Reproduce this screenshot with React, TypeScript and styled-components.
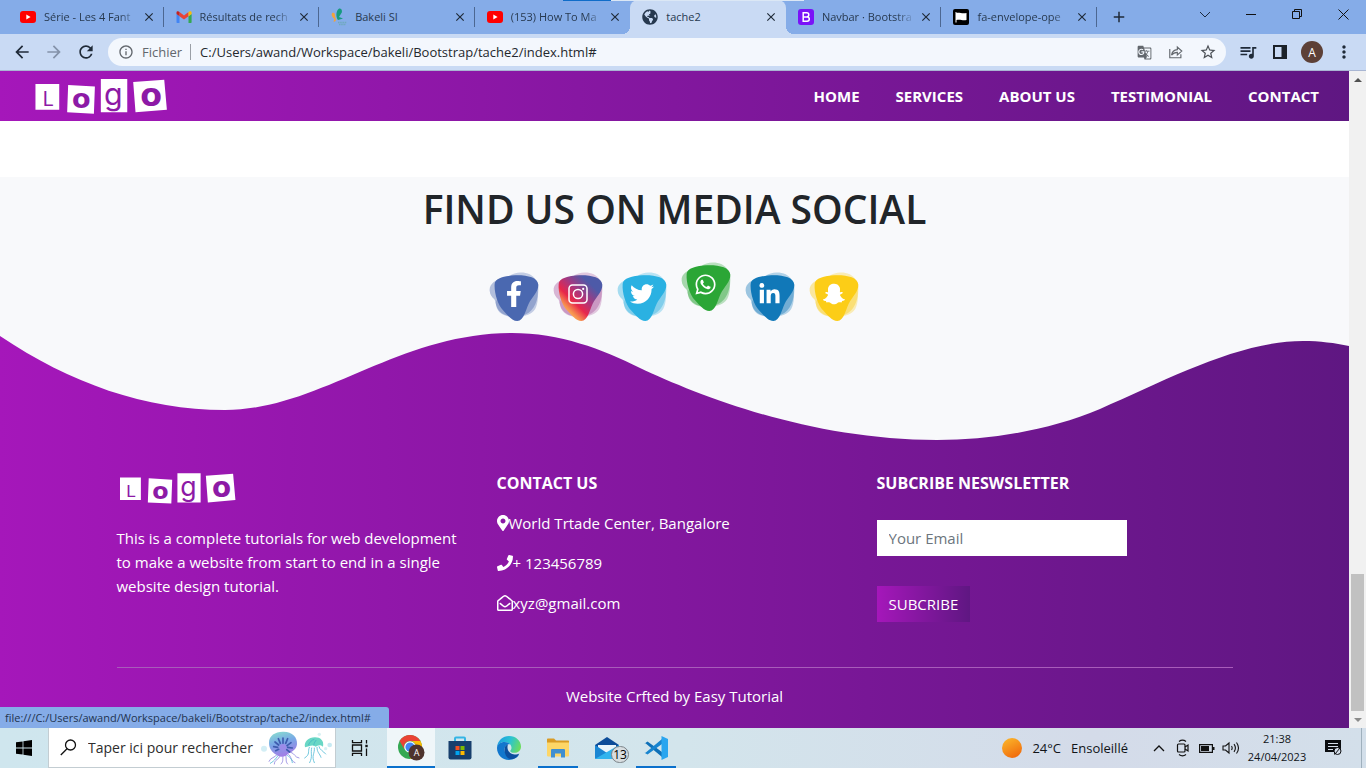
import React from 'react';
import styled, { createGlobalStyle, css } from 'styled-components';
import {
  FaFacebookF,
  FaGlobeAmericas,
  FaLinkedinIn,
  FaMapMarkerAlt,
  FaPhone,
  FaRegEnvelopeOpen,
  FaSnapchatGhost,
  FaTwitter,
  FaWhatsapp,
} from 'react-icons/fa';
import {
  MdAdd,
  MdArrowBack,
  MdArrowForward,
  MdClose,
  MdGTranslate,
  MdInfoOutline,
  MdMoreVert,
  MdQueueMusic,
  MdRefresh,
  MdStarBorder,
} from 'react-icons/md';

const brandGradient = 'linear-gradient(to right, #a517ba, #5f1782)';
const sans = '"Open Sans", "Noto Sans", sans-serif';

const GlobalStyle = createGlobalStyle`
  *, *::before, *::after { box-sizing: border-box; }
  body { margin: 0; font-family: ${sans}; font-size: 15px; line-height: 24px; color: #212529; }
  button, input { font-family: inherit; border: 0; padding: 0; margin: 0; background: none; }
  input { outline: 0; min-width: 0; }
  a { color: inherit; text-decoration: none; }
  h2, h3, p, ul { margin: 0; padding: 0; }
  ul { list-style: none; }
  svg { display: block; flex: none; }
`;

/* ---------- Window ---------- */

const Window = styled.div`
  position: relative;
  display: flex;
  flex-direction: column;
  min-height: 100vh;
`;

const LoadingLine = styled.div`
  position: absolute;
  top: 0;
  left: 563px;
  width: 241px;
  height: 1px;
  background: linear-gradient(to right, #0f6cc9 20%, #dbe7f5 20%);
`;

const TabStrip = styled.div`
  display: flex;
  height: 34px;
  padding-left: 8px;
  background: #85ace8;
`;

const Tabs = styled.div`
  display: flex;
  flex: 0 1 1089px;
  min-width: 0;
`;

const Tab = styled.div<{ $active?: boolean; $divider?: boolean }>`
  position: relative;
  display: flex;
  align-items: center;
  flex: 1 1 0;
  min-width: 0;
  padding: 0 8px 0 12px;
  color: #27394f;
  ${(p) =>
    p.$divider &&
    css`
      &::after {
        content: '';
        position: absolute;
        right: 0;
        top: 7px;
        height: 20px;
        width: 1px;
        background: #4c6791;
      }
    `}
  ${(p) =>
    p.$active &&
    css`
      background: #c9daf4;
      border-radius: 8px 8px 0 0;
      &::before,
      &::after {
        content: '';
        position: absolute;
        bottom: 0;
        width: 8px;
        height: 8px;
      }
      &::before {
        left: -8px;
        background: radial-gradient(circle at 0 0, transparent 8px, #c9daf4 8px);
      }
      &::after {
        right: -8px;
        background: radial-gradient(circle at 100% 0, transparent 8px, #c9daf4 8px);
      }
    `}
`;

const TabTitle = styled.button<{ $fade?: boolean }>`
  flex: 1;
  min-width: 0;
  margin: 0 4px 0 8px;
  overflow: hidden;
  white-space: nowrap;
  text-align: left;
  font-size: 11px;
  line-height: 20px;
  color: inherit;
  ${(p) => p.$fade && 'mask-image: linear-gradient(to right, #000 80%, transparent);'}
`;

const IconButton = styled.button<{ $w?: number }>`
  display: flex;
  align-items: center;
  justify-content: center;
  flex: none;
  width: ${(p) => p.$w ?? 14}px;
  color: #1f2a38;
`;

const WindowControls = styled.div`
  display: flex;
  margin-left: auto;
  height: 28px;
`;

const Toolbar = styled.div`
  display: flex;
  align-items: center;
  height: 37px;
  padding: 0 6px;
  background: #c9daf4;
  border-bottom: 1px solid #a9b6d3;
`;

const AddressBar = styled.div`
  display: flex;
  align-items: center;
  flex: 1;
  min-width: 0;
  height: 28px;
  margin: 0 6px;
  padding: 0 2px 0 10px;
  border-radius: 14px;
  background: #f3f7fd;
  font-size: 13px;
  color: #62676d;
`;

const Scheme = styled.span`
  padding: 0 8px;
  margin-right: 9px;
  line-height: 16px;
  border-right: 1px solid #9a9fa6;
`;

const UrlInput = styled.input`
  flex: 1;
  font-size: 13px;
  line-height: 20px;
  color: #24282d;
`;

const Avatar = styled.span`
  display: grid;
  place-items: center;
  width: 22px;
  height: 22px;
  border-radius: 50%;
  background: #5d4037;
  color: #fff;
  font-size: 12px;
`;

const Viewport = styled.div`
  position: relative;
  display: flex;
  flex: 1;
`;

const StatusBubble = styled.div`
  position: absolute;
  left: 0;
  bottom: 0;
  padding: 0 18px 0 5px;
  border-radius: 0 3px 0 0;
  background: #85ace8;
  color: #22334f;
  font-size: 11px;
  line-height: 21px;
`;

const Scrollbar = styled.div`
  display: flex;
  flex-direction: column;
  align-items: center;
  justify-content: space-between;
  flex: none;
  width: 17px;
  background: #f1f1f1;
`;

const ScrollEnd = styled.div`
  display: flex;
  flex-direction: column;
  align-items: center;
`;

const ScrollArrow = styled.button`
  display: grid;
  place-items: center;
  width: 17px;
  height: 17px;
`;

const ScrollThumb = styled.div`
  width: 13px;
  height: 137px;
  background: #c1c1c1;
`;

/* ---------- Web page ---------- */

const Page = styled.div`
  display: flex;
  flex-direction: column;
  flex: 1;
  min-width: 0;
  background: #fff;
`;

const Navbar = styled.header`
  display: flex;
  align-items: center;
  justify-content: space-between;
  height: 50px;
  padding: 0 30px 0 35px;
  margin-bottom: 56px;
  background: ${brandGradient};
`;

const NavLinks = styled.nav`
  display: flex;
  gap: 36px;
  font-weight: 700;
  color: #fff;
`;

const Social = styled.section`
  padding: 8px 0 8px;
  background: #f8f9fb;
  text-align: center;
`;

const SocialTitle = styled.h2`
  font-size: 39px;
  line-height: 48px;
  font-weight: 600;
`;

const SocialList = styled.div`
  display: flex;
  justify-content: center;
  gap: 14px;
  margin-top: 39px;
  padding-right: 2px;
`;

const SocialLink = styled.a<{ $raised?: boolean }>`
  display: grid;
  place-items: center;
  width: 50px;
  height: 50px;
  color: #fff;
  > * { grid-area: 1 / 1; }
  ${(p) => p.$raised && 'transform: translateY(-10px);'}
`;

const Glyph = styled.span<{ $size: number }>`
  font-size: ${(p) => p.$size}px;
  padding-bottom: 6px;
`;

const Footer = styled.footer`
  flex: 1;
  background: ${brandGradient};
  color: #fff;
`;

const Wave = styled.svg`
  width: 100%;
  height: 110px;
`;

const Container = styled.div`
  max-width: 1140px;
  margin: 0 auto;
  padding: 31px 12px 20px;
`;

const Columns = styled.div`
  display: grid;
  grid-template-columns: repeat(3, 1fr);
  gap: 24px;
  padding-bottom: 45px;
  border-bottom: 1px solid #a85cba;
`;

const FooterLogo = styled.div`
  padding: 2px 3px 22px;
`;

const About = styled.p`
  max-width: 356px;
`;

const FooterHeading = styled.h3`
  font-size: 16px;
  line-height: 24px;
  font-weight: 700;
`;

const ContactList = styled.ul`
  display: grid;
  gap: 16px;
  margin-top: 16px;
  li { display: flex; align-items: center; }
`;

const ContactIcon = styled.span<{ $narrow?: boolean }>`
  display: flex;
  justify-content: center;
  width: ${(p) => (p.$narrow ? 12 : 16)}px;
`;

const Newsletter = styled.form`
  display: flex;
  flex-direction: column;
  align-items: flex-start;
  gap: 30px;
  margin-top: 25px;
`;

const EmailInput = styled.input`
  width: 250px;
  max-width: 100%;
  height: 36px;
  padding: 0 12px;
  background: #fff;
  font-size: 15px;
  color: #212529;
  &::placeholder { color: #6c757d; opacity: 1; }
`;

const SubmitButton = styled.button`
  height: 36px;
  padding: 0 12px;
  background: ${brandGradient};
  color: #fff;
  font-size: 15px;
`;

const Credit = styled.p`
  margin-top: 16px;
  text-align: center;
`;

/* ---------- Taskbar ---------- */

const Taskbar = styled.footer`
  display: flex;
  height: 40px;
  background: linear-gradient(to right, #cfe6ee, #d3e5ec 50%, #d4dbe9 80%, #d3dfea);
  color: #101418;
`;

const TaskButton = styled.button<{ $active?: boolean; $open?: boolean }>`
  position: relative;
  display: grid;
  place-items: center;
  flex: none;
  width: 48px;
  height: 40px;
  background: ${(p) => (p.$active ? '#eff6f9' : 'none')};
  ${(p) =>
    (p.$active || p.$open) &&
    css`
      &::after {
        content: '';
        position: absolute;
        bottom: 0;
        left: ${p.$active ? 0 : 4}px;
        right: ${p.$active ? 0 : 4}px;
        height: 2px;
        background: #0a70cc;
      }
    `}
`;

const SearchBox = styled.label`
  display: flex;
  align-items: center;
  flex: 0 1 288px;
  min-width: 0;
  padding: 0 2px 0 11px;
  background: #fff;
  border: 1px solid #c3cdd2;
  border-top: 0;
`;

const SearchInput = styled.input`
  flex: 1;
  width: 0;
  margin: 0 4px 0 11px;
  font-size: 14px;
  &::placeholder { color: #2d2d2d; opacity: 1; }
`;

const PinnedApps = styled.div`
  display: flex;
  gap: 1px;
  margin-left: 3px;
`;

const CountBadge = styled.span`
  position: absolute;
  right: 2px;
  bottom: 5px;
  width: 18px;
  border: 1px solid #7b8388;
  border-radius: 9px;
  background: #d7dde0;
  font-size: 12px;
  line-height: 15px;
`;

const Tray = styled.div`
  display: flex;
  align-items: center;
  margin-left: auto;
  padding-right: 4px;
`;

const Weather = styled.button`
  display: flex;
  align-items: center;
  gap: 10px;
  margin-right: 19px;
  font-size: 13px;
  color: inherit;
`;

const Clock = styled.time`
  width: 68px;
  text-align: center;
  font-size: 11px;
  line-height: 18px;
`;

const Notifications = styled(IconButton)`
  height: 40px;
  margin-left: 3px;
  padding-right: 8px;
  border-right: 1px solid #9fb0bd;
`;

/* ---------- Drawings ---------- */

const Logo = ({ width, height }: { width: number; height: number }) => (
  <svg width={width} height={height} viewBox="0 0 400 106" role="img" aria-label="Logo">
    <g fill="#fff">
      <path d="M0 15h72v78H0zM99 18l81 5-3 82-81-4zM198 0h80v101h-80zM296 9l94-7 8 91-95 8z" />
    </g>
    <g fill="#8d1aa6" textAnchor="middle">
      <text x="38" y="82" fontFamily="Roboto" fontSize="60" fontWeight="400">L</text>
      <text x="139" y="89" fontFamily="DejaVu Sans" fontSize="82" fontWeight="700">o</text>
      <text x="236" y="80" fontFamily="Inter" fontSize="92" fontWeight="400">g</text>
      <text x="350" y="83" fontFamily="DejaVu Sans" fontSize="96" fontWeight="700">o</text>
    </g>
  </svg>
);

const Blob = ({ fill, soft }: { fill: string; soft: string }) => (
  <svg width="50" height="50" viewBox="0 0 150 150" aria-hidden="true">
    <defs>
      <linearGradient id="insta" x1="0.1" y1="0.95" x2="0.85" y2="0.15">
        <stop offset="0.08" stopColor="#fdc468" />
        <stop offset="0.22" stopColor="#f7934f" />
        <stop offset="0.4" stopColor="#e8274b" />
        <stop offset="0.62" stopColor="#a8377f" />
        <stop offset="0.9" stopColor="#4d5aa8" />
      </linearGradient>
    </defs>
    <g fill={soft} opacity="0.4">
      <path d="M2 56C0 36 20 24 44 16c40-12 98-6 102 36 4 40-18 72-44 78-30 8-64 2-76-20-8-14-5-20-10-28C8 74 3 68 2 56z" />
    </g>
    <path
      fill={soft}
      opacity="0.3"
      d="M62 12c12-12 42-14 60-5 18 9 28 28 26 50-2 20 0 44-14 60-14 14-40 20-62 18-34-2-50-16-52-44z"
    />
    <path
      fill={fill}
      d="M17 36c1-17 28-24 62-26 35-1 67 6 69 28 1 20-19 37-29 57-9 18-14 51-34 52-16 0-28-16-43-32C26 98 15 62 17 36z"
    />
  </svg>
);

const InstagramGlyph = () => (
  <svg width="20" height="20" viewBox="0 0 20 20" fill="none" stroke="#fff" strokeWidth="1.500">
    <rect x="1" y="1" width="18" height="18" rx="3.500" />
    <circle cx="10" cy="10" r="4.600" />
    <circle cx="15.200" cy="4.900" r="1.100" fill="#fff" stroke="none" />
  </svg>
);

const YouTubeIcon = () => (
  <svg width="16" height="16" viewBox="0 0 16 16">
    <rect y="2" width="16" height="12" rx="3" fill="#f00" />
    <path d="M6.3 5.6v4.8L10.6 8z" fill="#fff" />
  </svg>
);

const GmailIcon = () => (
  <svg width="16" height="16" viewBox="0 0 16 16">
    <path fill="#4285f4" d="M1 14h2.5V7.2L.5 5v8c0 .6.2 1 .5 1z" />
    <path fill="#34a853" d="M12.5 14H15c.4 0 .6-.4.6-1V5l-3.100 2.200z" />
    <path fill="#ea4335" d="M3.500 7.200V3L8 6.400 12.500 3v4.200L8 10.600z" />
    <path fill="#c5221f" d="M.5 5V3.800C.5 2.200 2.200 1.900 3.500 3v4.200z" />
    <path fill="#fbbc04" d="M12.500 3c1.300-1.100 3.100-.8 3.100.8V5l-3.100 2.200z" />
  </svg>
);

const BakeliIcon = () => (
  <svg width="16" height="18" viewBox="0 0 16 18">
    <path fill="#159a80" d="M7.500 1c2-1.200 4 .5 3.300 3.500L8 9l4 1.500-5 1.500C4.600 9 5 3 7.500 1z" />
    <path fill="#f2a33c" d="M1 5c2-1 3 0 3 3l1 4c-.5 1.500-1.500 2-2.500 1.500L3.500 11C1 9 0 7 1 5z" />
    <path fill="none" stroke="#6fa9bd" strokeWidth="1.500" d="M7 14.500h9M8 16.500h7" strokeDasharray="1.500 .7" />
  </svg>
);

const BootstrapIcon = () => (
  <svg width="16" height="16" viewBox="0 0 16 16">
    <rect width="16" height="16" rx="3" fill="#7a12f8" />
    <path fill="none" stroke="#fff" strokeWidth="1.500" d="M5.200 3.700h3.500a2.100 2.100 0 0 1 0 4.200H5.200zM5.200 7.900h3.900a2.200 2.200 0 0 1 0 4.400H5.200z" />
  </svg>
);

const FlagIcon = () => (
  <svg width="16" height="16" viewBox="0 0 16 16">
    <rect width="16" height="16" rx="2" fill="#000" />
    <path fill="#fff" d="M2.500 3h1v1c3-1 5 1 10 0v7c-4 1-6-1-10 0v2.500h-1z" />
  </svg>
);

const ShareIcon = () => (
  <svg width="16" height="16" viewBox="0 0 18 18" fill="none" stroke="#62676d" strokeWidth="1.300">
    <path d="M2 5.500v10h12.500v-4M10.500 6.400V3.500L15.500 8l-5 4.300V9.400C7.300 9.400 5.500 10.500 4 12.500 4.500 9 6.800 6.800 10.500 6.400z" />
  </svg>
);

const SidePanelIcon = () => (
  <svg width="14" height="14" viewBox="0 0 14 14">
    <path d="M1 1h12v12H1z" fill="none" stroke="#1b2128" strokeWidth="2" />
    <path d="M8.500 1H13v12H8.500z" fill="#1b2128" />
  </svg>
);

const Caret = ({ down }: { down?: boolean }) => (
  <svg width="8" height="4" viewBox="0 0 8 4">
    <path d={down ? 'M0 0h8L4 4z' : 'M0 4h8L4 0z'} fill={down ? '#8b8b8b' : '#505050'} />
  </svg>
);

const WindowsIcon = () => (
  <svg width="16" height="16" viewBox="0 0 16 16">
    <path fill="#000" d="M0 2.300 6.600 1.400v6.200H0zM7.400 1.300 16 0v7.600H7.400zM0 8.400h6.600v6.200L0 13.700zM7.400 8.400H16V16l-8.600-1.300z" />
  </svg>
);

const SearchIcon = () => (
  <svg width="17" height="17" viewBox="0 0 17 17" fill="none" stroke="#111" strokeWidth="1.300">
    <circle cx="10.500" cy="6" r="5" />
    <path d="M7 9.700.8 16" />
  </svg>
);

const Jellyfish = () => (
  <svg width="72" height="36" viewBox="0 0 216 108" fill="none">
    <defs>
      <linearGradient id="jelly" x1="0" y1="0" x2="0.3" y2="1">
        <stop offset="0" stopColor="#8be3cd" />
        <stop offset="0.5" stopColor="#78a8e6" />
        <stop offset="1" stopColor="#a080e6" />
      </linearGradient>
    </defs>
    <circle cx="9" cy="56" r="9" fill="#d3eef5" />
    <circle cx="206" cy="45" r="7" fill="#c6eaf3" />
    <circle cx="175" cy="13" r="5" fill="#d7f1f4" />
    <circle cx="194" cy="56" r="5" fill="#d7f1f4" />
    <g strokeWidth="2.500" strokeLinecap="round">
      <path stroke="#8f84e0" d="M50 72c-8 12-22 10-26 22M58 76c-4 14-18 12-18 26M66 78c-2 12 2 16-6 24M74 76c4 12-2 18 6 26M82 72c10 8 6 20 20 26M88 66c14 4 12 16 26 18" />
      <path stroke="#54bcd6" d="M54 74c-10 10-10 16-26 26M76 74c10 8 16 10 18 24M145 52c-6 14 4 20-14 32M152 54c-4 16 4 24-6 44M160 54c2 18-10 22 0 44M168 52c0 16 8 18 12 30M174 50c2 10 12 12 20 22" />
    </g>
    <path fill="url(#jelly)" d="M24 38C24 16 44 4 68 5c26 1 42 16 40 38-2 14-12 22-24 26-14 16-30 12-36 6C34 68 24 56 24 38z" />
    <path stroke="#3e5cae" strokeWidth="5" strokeLinecap="round" d="M66 24v16M52 26l6 14M80 26l-6 14M42 36l11 9M90 38l-12 9M38 50l12 2M94 54l-14-2M44 62l9-4M86 66l-9-7" />
    <circle cx="66" cy="52" r="10" fill="#9b8be9" />
    <path fill="#69d7c5" d="M132 52c-4-16 10-30 30-30 16 0 28 10 24 28-10-8-16-4-22 0-10-8-20 0-32 2z" />
    <path stroke="#3daec4" strokeWidth="2" d="M142 46c4-10 10-16 18-18M158 46c2-8 4-12 8-16" />
  </svg>
);

const TaskViewIcon = () => (
  <svg width="18" height="16" viewBox="0 0 18 16" fill="none" stroke="#111" strokeWidth="1.300">
    <path d="M1.500 0v2.700h9V0M1.500 16v-2.700h9V16M1.500 5h9v6h-9zM15.500 0v3.500M15.500 8.500V16" />
    <path d="M14.300 4.800h2.400v2.400h-2.400z" fill="#111" stroke="none" />
  </svg>
);

const ChromeIcon = () => (
  <svg width="28" height="26" viewBox="0 0 28 26">
    <circle cx="13" cy="12" r="12" fill="#34a853" />
    <path fill="#ea4335" d="M2.600 6A12 12 0 0 1 23.400 6H13a6 6 0 0 0-5.500 8.400z" />
    <path fill="#fbbc04" d="M23.400 6A12 12 0 0 1 13 24l5.200-9A6 6 0 0 0 13 6z" />
    <circle cx="13" cy="12" r="5.800" fill="#fff" />
    <circle cx="13" cy="12" r="4.600" fill="#4285f4" />
    <circle cx="19.500" cy="17.500" r="8" fill="#4e342e" />
    <text x="19.500" y="21" fontSize="9" fill="#fff" textAnchor="middle" fontFamily="Open Sans">A</text>
  </svg>
);

const StoreIcon = () => (
  <svg width="24" height="24" viewBox="0 0 24 24">
    <path d="M7 6V2.600C7 1.900 7.400 1.500 8 1.500h8c.6 0 1 .4 1 1.100V6" fill="none" stroke="#35b5e5" strokeWidth="2" />
    <path d="M.5 5h23v16.500a2 2 0 0 1-2 2h-19a2 2 0 0 1-2-2z" fill="#173f6d" />
    <path fill="#f25022" d="M7.500 10h4v4h-4z" />
    <path fill="#7fba00" d="M12.500 10h4v4h-4z" />
    <path fill="#00a4ef" d="M7.500 15h4v4h-4z" />
    <path fill="#ffb900" d="M12.500 15h4v4h-4z" />
  </svg>
);

const EdgeIcon = () => (
  <svg width="24" height="24" viewBox="0 0 24 24">
    <defs>
      <linearGradient id="edgeTop" x1="0" y1="0.300" x2="1" y2="0.600">
        <stop offset="0" stopColor="#1b9de2" />
        <stop offset="0.500" stopColor="#2bc3d2" />
        <stop offset="1" stopColor="#6cdd5c" />
      </linearGradient>
    </defs>
    <path fill="url(#edgeTop)" d="M0 11C.6 4.500 6 0 12 0c7 0 12 5 12 10.500 0 4-3 6.300-6.500 6.300-3 0-4.300-1-4.300-1.800 0-.6 1.300-1 1.300-3.200C14.500 8.500 11 6 7.500 6 4 6 1 8 0 11z" />
    <path fill="#1277cd" d="M0 12c0-3.500 3.500-6 7.500-6 2.500 0 4.500 1 5.700 2.400C9.500 8 7.300 11 7.500 14c.3 4 4 7 8.500 6.800 2.500 0 4.500-.8 6-2C20 22 16.500 24 12 24 5 24 0 18.500 0 12z" />
    <path fill="#0c4f9e" d="M7.500 14C7.300 11 9 9 11 8.600 9.500 12 11 18 17.500 18.600c2 .1 3.500-.4 4.800-1C20 22.500 16 23.500 13 23 9.500 22 7.700 18 7.500 14z" />
  </svg>
);

const ExplorerIcon = () => (
  <svg width="22" height="20" viewBox="0 0 22 20">
    <path fill="#d99b25" d="M0 1.500C0 .7.500.5 1 .5h6l2 2h12c.6 0 1 .4 1 1V8H0z" />
    <path fill="#fdd667" d="M0 4.500h22v13a1 1 0 0 1-1 1H1a1 1 0 0 1-1-1z" />
    <path fill="#3f8fd0" d="M4 19.500V12a1 1 0 0 1 1-1h12a1 1 0 0 1 1 1v7.500h-4v-4H8v4z" />
  </svg>
);

const MailIcon = () => (
  <svg width="24" height="24" viewBox="0 0 24 24">
    <path fill="#0d4c99" d="M0 9 12 1l12 8v4H0z" />
    <path fill="#e9f4fb" d="M3 9h18v7H3z" />
    <path fill="#1a86d3" d="m0 9 12 8-10 6H1a1 1 0 0 1-1-1z" />
    <path fill="#31b4ee" d="M24 9 0 23h23a1 1 0 0 0 1-1z" />
  </svg>
);

const CodeIcon = () => (
  <svg width="24" height="24" viewBox="0 0 24 24">
    <path fill="#0e70b8" d="M1.500 7.300 18 21v-5L3.500 5.600 0 8z" />
    <path fill="#1784cf" d="M1.500 16.700 18 3v5L3.500 18.400.5 16.800z" />
    <path fill="#29a5ef" d="M17.500 0 24 3v18l-6.500 3z" />
  </svg>
);

const CameraTrayIcon = () => (
  <svg width="14" height="18" viewBox="0 0 14 18" fill="none" stroke="#111" strokeWidth="1.200">
    <path d="M3 2.500C5 1 8 1 10 2.500M3 15.500c2 1.500 5 1.500 7 0" />
    <rect x="1.500" y="5" width="7.500" height="8" rx="1" />
    <path d="M9 8l3-2v6L9 10" />
  </svg>
);

const BatteryIcon = () => (
  <svg width="16" height="9" viewBox="0 0 16 9">
    <path d="M.6.6h12.800v7.800H.6z" fill="none" stroke="#111" strokeWidth="1.200" />
    <path d="M2 2h8v5H2zM14 3h1.500v3H14z" fill="#111" />
  </svg>
);

const VolumeIcon = () => (
  <svg width="18" height="14" viewBox="0 0 18 14" fill="none" stroke="#111" strokeWidth="1.100">
    <path d="M1 5h2.500L7 2v10L3.500 9H1zM9.500 5c.8 1.200.8 2.800 0 4M12 3.200c1.700 2.300 1.700 5.300 0 7.600M14.500 1.500c2.400 3.300 2.400 7.700 0 11" />
  </svg>
);

const NotificationIcon = () => (
  <svg width="18" height="16" viewBox="0 0 18 16">
    <path d="M0 0h16v12h-4l-3 3v-3H0z" fill="#0b0d10" />
    <path d="M3 3.500h10M3 6.500h10M3 9.500h5" stroke="#d4dde9" strokeWidth="1" />
    <circle cx="12.500" cy="11" r="3.500" fill="#d4dde9" stroke="#0b0d10" />
    <path d="m10 14 5-6" stroke="#0b0d10" />
  </svg>
);

/* ---------- Data ---------- */

const tabs = [
  { title: 'Série - Les 4 Fant', icon: <YouTubeIcon />, fade: true, divider: true },
  { title: 'Résultats de rech', icon: <GmailIcon />, fade: true, divider: true },
  { title: 'Bakeli SI', icon: <BakeliIcon />, divider: true },
  { title: '(153) How To Ma', icon: <YouTubeIcon />, fade: true },
  { title: 'tache2', icon: <FaGlobeAmericas size={16} />, active: true },
  { title: 'Navbar · Bootstra', icon: <BootstrapIcon />, fade: true, divider: true },
  { title: 'fa-envelope-ope', icon: <FlagIcon />, fade: true, divider: true },
];

const socials = [
  { name: 'Facebook', fill: '#4a68b0', soft: '#4a68b0', icon: <FaFacebookF />, size: 26 },
  { name: 'Instagram', fill: 'url(#insta)', soft: '#a8539b', icon: <InstagramGlyph />, size: 22 },
  { name: 'Twitter', fill: '#2ab1e2', soft: '#2ab1e2', icon: <FaTwitter />, size: 24 },
  { name: 'WhatsApp', fill: '#2ba636', soft: '#2ba636', icon: <FaWhatsapp />, size: 23, raised: true },
  { name: 'LinkedIn', fill: '#1178b8', soft: '#1178b8', icon: <FaLinkedinIn />, size: 23 },
  { name: 'Snapchat', fill: '#fccd17', soft: '#fccd17', icon: <FaSnapchatGhost />, size: 22 },
];

const links = ['HOME', 'SERVICES', 'ABOUT US', 'TESTIMONIAL', 'CONTACT'];

export default function App() {
  return (
    <>
      <GlobalStyle />
      <Window>
        <TabStrip>
          <Tabs>
            {tabs.map((t) => (
              <Tab key={t.title} $active={t.active} $divider={t.divider}>
                {t.icon}
                <TabTitle $fade={t.fade}>{t.title}</TabTitle>
                <IconButton aria-label={`Fermer ${t.title}`}>
                  <MdClose size={14} stroke="currentColor" />
                </IconButton>
              </Tab>
            ))}
          </Tabs>
          <IconButton $w={44} aria-label="Nouvel onglet">
            <MdAdd size={18} />
          </IconButton>
          <WindowControls>
            <IconButton $w={46} aria-label="Rechercher dans les onglets">
              <svg width="12" height="7" viewBox="0 0 12 7" fill="none" stroke="#1d2b40">
                <path d="m1 1 5 5 5-5" />
              </svg>
            </IconButton>
            <IconButton $w={46} aria-label="Réduire">
              <svg width="10" height="1" viewBox="0 0 10 1">
                <path d="M0 0h10v1H0z" fill="#111" />
              </svg>
            </IconButton>
            <IconButton $w={46} aria-label="Restaurer">
              <svg width="10" height="10" viewBox="0 0 10 10" fill="none" stroke="#111">
                <path d="M.5 2.500h7v7h-7zM2.500 2.500v-2h7v7h-2" />
              </svg>
            </IconButton>
            <IconButton $w={46} aria-label="Fermer la fenêtre">
              <svg width="11" height="11" viewBox="0 0 11 11" stroke="#111">
                <path d="m.5.5 10 10M10.500.5l-10 10" />
              </svg>
            </IconButton>
          </WindowControls>
          <LoadingLine />
        </TabStrip>

        <Toolbar>
          <IconButton $w={32} aria-label="Retour">
            <MdArrowBack size={20} />
          </IconButton>
          <IconButton $w={32} aria-label="Avancer">
            <MdArrowForward size={20} color="#8492a9" />
          </IconButton>
          <IconButton $w={32} aria-label="Actualiser">
            <MdRefresh size={20} />
          </IconButton>
          <AddressBar>
            <MdInfoOutline size={16} />
            <Scheme>Fichier</Scheme>
            <UrlInput
              aria-label="Adresse"
              defaultValue="C:/Users/awand/Workspace/bakeli/Bootstrap/tache2/index.html#"
            />
            <IconButton $w={32} aria-label="Traduire">
              <MdGTranslate size={15} color="#62676d" />
            </IconButton>
            <IconButton $w={32} aria-label="Partager">
              <ShareIcon />
            </IconButton>
            <IconButton $w={32} aria-label="Favoris">
              <MdStarBorder size={18} color="#4c5157" />
            </IconButton>
          </AddressBar>
          <IconButton $w={32} aria-label="Contrôle multimédia">
            <MdQueueMusic size={20} />
          </IconButton>
          <IconButton $w={32} aria-label="Panneau latéral">
            <SidePanelIcon />
          </IconButton>
          <IconButton $w={32} aria-label="Profil">
            <Avatar>A</Avatar>
          </IconButton>
          <IconButton $w={32} aria-label="Menu">
            <MdMoreVert size={20} />
          </IconButton>
        </Toolbar>

        <Viewport>
          <Page>
            <Navbar>
              <a href="#">
                <Logo width={133} height={35} />
              </a>
              <NavLinks>
                {links.map((l) => (
                  <a key={l} href="#">
                    {l}
                  </a>
                ))}
              </NavLinks>
            </Navbar>

            <Social>
              <SocialTitle>FIND US ON MEDIA SOCIAL</SocialTitle>
              <SocialList>
                {socials.map((s) => (
                  <SocialLink key={s.name} href="#" aria-label={s.name} $raised={s.raised}>
                    <Blob fill={s.fill} soft={s.soft} />
                    <Glyph $size={s.size}>{s.icon}</Glyph>
                  </SocialLink>
                ))}
              </SocialList>
            </Social>

            <Footer>
              <Wave viewBox="0 -3 1349 110" preserveAspectRatio="none" aria-hidden="true">
                <path
                  fill="#f8f9fb"
                  d="M0 3C70 50 145 77 225 77 320 77 397 0 512 0c48 0 90 16 128 35 60 28 170 72 297 72 55 0 113-10 163-31 70-31 140-68 203-68 17 0 32 2 46 5V-4H0z"
                />
              </Wave>
              <Container>
                <Columns>
                  <div>
                    <FooterLogo>
                      <Logo width={116} height={31} />
                    </FooterLogo>
                    <About>
                      This is a complete tutorials for web development to make a website from start to end in a single
                      website design tutorial.
                    </About>
                  </div>
                  <div>
                    <FooterHeading>CONTACT US</FooterHeading>
                    <ContactList>
                      <li>
                        <ContactIcon $narrow>
                          <FaMapMarkerAlt size={16} />
                        </ContactIcon>
                        World Trtade Center, Bangalore
                      </li>
                      <li>
                        <ContactIcon>
                          <FaPhone size={16} />
                        </ContactIcon>
                        + 123456789
                      </li>
                      <li>
                        <ContactIcon>
                          <FaRegEnvelopeOpen size={16} />
                        </ContactIcon>
                        xyz@gmail.com
                      </li>
                    </ContactList>
                  </div>
                  <div>
                    <FooterHeading>SUBCRIBE NESWSLETTER</FooterHeading>
                    <Newsletter onSubmit={(e) => e.preventDefault()}>
                      <EmailInput type="email" placeholder="Your Email" aria-label="Your Email" />
                      <SubmitButton type="submit">SUBCRIBE</SubmitButton>
                    </Newsletter>
                  </div>
                </Columns>
                <Credit>Website Crfted by Easy Tutorial</Credit>
              </Container>
            </Footer>
          </Page>

          <Scrollbar>
            <ScrollArrow aria-label="Défiler vers le haut">
              <Caret />
            </ScrollArrow>
            <ScrollEnd>
              <ScrollThumb />
              <ScrollArrow aria-label="Défiler vers le bas">
                <Caret down />
              </ScrollArrow>
            </ScrollEnd>
          </Scrollbar>
          <StatusBubble>file:///C:/Users/awand/Workspace/bakeli/Bootstrap/tache2/index.html#</StatusBubble>
        </Viewport>

        <Taskbar>
          <TaskButton aria-label="Démarrer">
            <WindowsIcon />
          </TaskButton>
          <SearchBox>
            <SearchIcon />
            <SearchInput aria-label="Rechercher" placeholder="Taper ici pour rechercher" />
            <Jellyfish />
          </SearchBox>
          <TaskButton aria-label="Affichage des tâches">
            <TaskViewIcon />
          </TaskButton>
          <PinnedApps>
            <TaskButton $active aria-label="Chrome">
              <ChromeIcon />
            </TaskButton>
            <TaskButton aria-label="Microsoft Store">
              <StoreIcon />
            </TaskButton>
            <TaskButton aria-label="Edge">
              <EdgeIcon />
            </TaskButton>
            <TaskButton $open aria-label="Explorateur de fichiers">
              <ExplorerIcon />
            </TaskButton>
            <TaskButton aria-label="Courrier">
              <MailIcon />
              <CountBadge>13</CountBadge>
            </TaskButton>
            <TaskButton $open aria-label="Visual Studio Code">
              <CodeIcon />
            </TaskButton>
          </PinnedApps>
          <Tray>
            <Weather>
              <svg width="20" height="20" viewBox="0 0 20 20">
                <defs>
                  <linearGradient id="sun" x1="0.200" y1="0" x2="0.700" y2="1">
                    <stop offset="0" stopColor="#fbb52a" />
                    <stop offset="1" stopColor="#f0690c" />
                  </linearGradient>
                </defs>
                <circle cx="10" cy="10" r="10" fill="url(#sun)" />
              </svg>
              <span>24°C</span>
              <span>Ensoleillé</span>
            </Weather>
            <IconButton $w={24} aria-label="Icônes cachées">
              <svg width="12" height="7" viewBox="0 0 12 7" fill="none" stroke="#111" strokeWidth="1.300">
                <path d="m1 6 5-5 5 5" />
              </svg>
            </IconButton>
            <IconButton $w={24} aria-label="Caméra">
              <CameraTrayIcon />
            </IconButton>
            <IconButton $w={24} aria-label="Batterie">
              <BatteryIcon />
            </IconButton>
            <IconButton $w={24} aria-label="Volume">
              <VolumeIcon />
            </IconButton>
            <Clock>
              21:38
              <br />
              24/04/2023
            </Clock>
            <Notifications $w={48} aria-label="Notifications">
              <NotificationIcon />
            </Notifications>
          </Tray>
        </Taskbar>
      </Window>
    </>
  );
}
